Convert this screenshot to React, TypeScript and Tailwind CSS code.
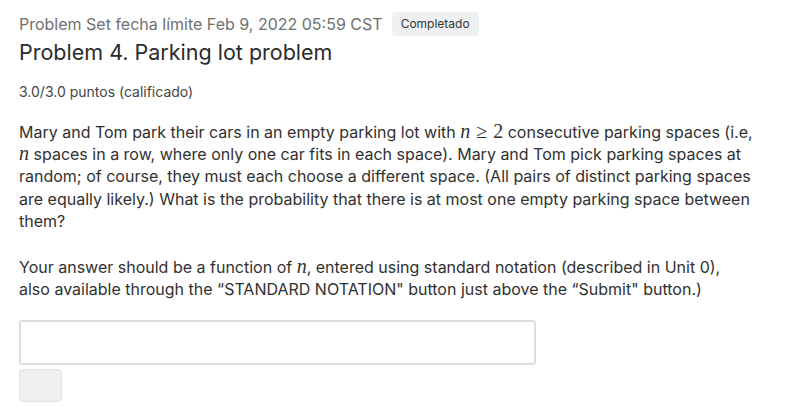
export default function App() {
  const M = ({ children }: { children: React.ReactNode }) => (
    <span className="font-['Liberation_Serif',serif] italic text-[20px] leading-none">{children}</span>
  );

  return (
    <div className="min-h-[418px] bg-white px-[19px] pt-[12px] font-['Inter',sans-serif] text-[#313131]">
      <div className="flex items-center gap-[9px]">
        <span className="text-[16px] text-[#707070]">
          Problem Set fecha límite Feb 9, 2022 05:59 CST
        </span>
        <span className="rounded-[4px] bg-[#eff0f1] px-[9px] py-[3px] text-[12px] text-[#333]">
          Completado
        </span>
      </div>

      <h2 className="mt-[1px] text-[21.5px] leading-[30px] text-[#2b2b2b]">
        Problem 4. Parking lot problem
      </h2>

      <p className="mt-[14px] text-[14px] text-[#454545]">3.0/3.0 puntos (calificado)</p>

      <div className="w-[735px]">
        <p className="mt-[19px] text-[16px] leading-[22.2px] text-[#313131]">
          Mary and Tom park their cars in an empty parking lot with <M>n</M>
          <span className="mx-[6px] font-['Liberation_Serif',serif] text-[20px] leading-none">≥</span>
          <span className="font-['Liberation_Serif',serif] text-[20px] leading-none">2</span>{" "}
          consecutive parking spaces (i.e, <M>n</M> spaces in a row, where only one car fits in
          each space). Mary and Tom pick parking spaces at random; of course, they must each
          choose a different space. (All pairs of distinct parking spaces are equally likely.)
          What is the probability that there is at most one empty parking space between them?
        </p>

        <p className="mt-[24px] text-[16px] leading-[22.2px] text-[#313131]">
          Your answer should be a function of <M>n</M>, entered using standard notation
          (described in Unit 0), also available through the “STANDARD NOTATION" button just
          above the “Submit" button.)
        </p>
      </div>

      <div className="mt-[20px] h-[45px] w-[517px] rounded-[3px] border-2 border-[#dedede] bg-white" />
      <button className="mt-[4px] block h-[33px] w-[43px] rounded-[4px] border border-[#e2e2e2] bg-[#efefef]" />
    </div>
  );
}
